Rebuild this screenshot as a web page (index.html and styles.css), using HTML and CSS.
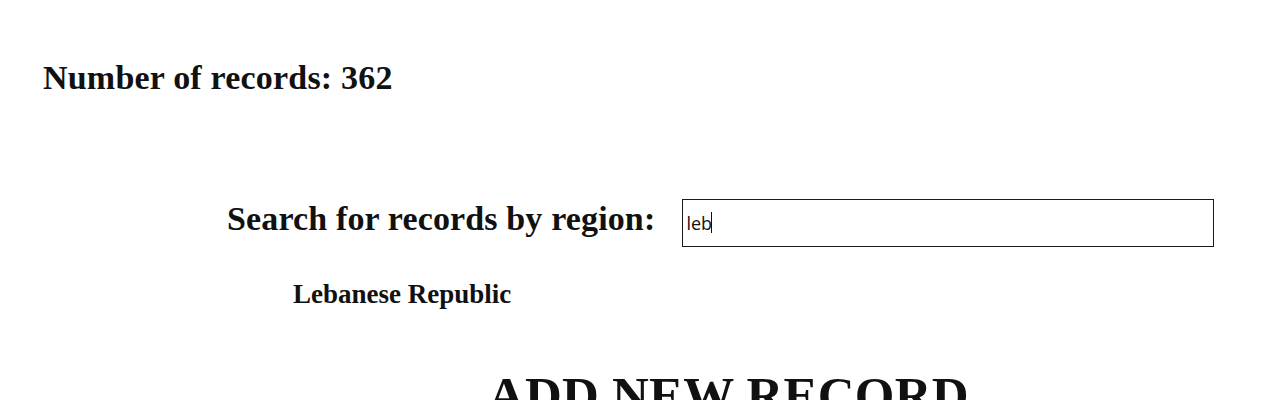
FILE: index.html
```html
<!DOCTYPE html>
<html>
<head>
<meta charset="utf-8">
<link rel="stylesheet" href="styles.css">
</head>
<body>
<div class="page">
  <h2 class="count">Number of records: 362</h2>
  <div class="search-row">
    <label class="search-label" for="region">Search for records by region:</label>
    <div class="field">
      <input id="region" class="search-input" type="text" value="leb">
      <span class="caret"></span>
    </div>
  </div>
  <ul class="results">
    <li class="result">Lebanese Republic</li>
  </ul>
  <h1 class="add-title">ADD NEW RECORD</h1>
</div>
</body>
</html>
```
FILE: styles.css
```css
html, body {
  margin: 0;
  padding: 0;
  background: #fff;
}
.page {
  font-family: "Liberation Serif", "Times New Roman", serif;
  font-weight: bold;
  color: #111;
  padding-top: 59px;
}
.count {
  margin: 0;
  padding-left: 43px;
  font-size: 34px;
  line-height: 38px;
  letter-spacing: 0.2px;
  font-weight: bold;
}
.search-row {
  display: flex;
  align-items: flex-start;
  margin-top: 102px;
  padding-left: 227px;
  gap: 27px;
}
.search-label {
  font-size: 34px;
  line-height: 38px;
  letter-spacing: 0.14px;
  margin-top: 1px;
  white-space: nowrap;
}
.field {
  position: relative;
}
.search-input {
  box-sizing: border-box;
  width: 532px;
  height: 48px;
  border: 1px solid #1a1a1a;
  padding: 0 3px;
  margin: 0;
  font-family: "Open Sans", sans-serif;
  font-size: 18px;
  color: #111;
  background: #fff;
  outline: none;
  caret-color: transparent;
}
.caret {
  position: absolute;
  left: 29px;
  top: 13px;
  width: 1px;
  height: 21px;
  background: #111;
}
.results {
  list-style: none;
  margin: 32px 0 0;
  padding-left: 293px;
}
.result {
  font-size: 27px;
  line-height: 31px;
}
.add-title {
  margin: 56px 0 0;
  padding-left: 488px;
  font-size: 51px;
  line-height: 58px;
  letter-spacing: 0.2px;
  font-weight: bold;
}
```
